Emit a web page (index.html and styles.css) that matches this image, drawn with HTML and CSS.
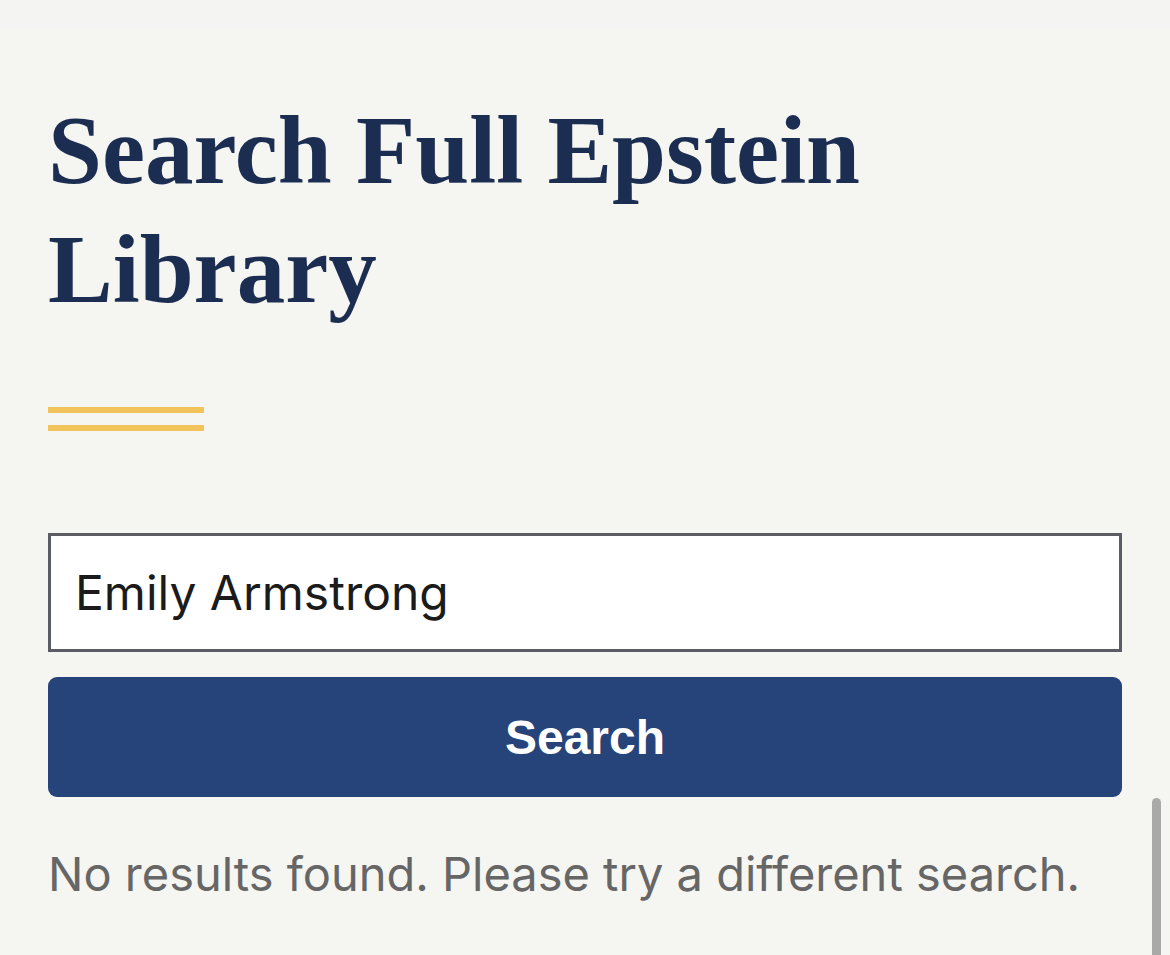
FILE: index.html
```html
<!DOCTYPE html>
<html lang="en">
<head>
<meta charset="utf-8">
<title>Search Full Epstein Library</title>
<link rel="stylesheet" href="styles.css">
</head>
<body>
<div class="topband"></div>
<main class="page">
  <h1 class="title">Search Full Epstein Library</h1>
  <div class="rule"><span></span><span></span></div>
  <form class="search">
    <input class="field" type="text" value="Emily Armstrong" aria-label="Search">
    <button class="btn" type="button">Search</button>
  </form>
  <p class="empty">No results found. Please try a different search.</p>
</main>
<div class="scrollbar"></div>
</body>
</html>
```

FILE: styles.css
```css
html, body {
  margin: 0;
  padding: 0;
  height: 100%;
  overflow: hidden;
}
body {
  background: #f5f5f1;
  font-family: "Inter", "Noto Sans", sans-serif;
}
.topband {
  height: 29px;
  background: #f4f4f3;
}
.page {
  padding: 62px 48px 0 48px;
  display: flex;
  flex-direction: column;
}
.title {
  margin: 0;
  font-family: "Liberation Serif", serif;
  font-weight: 700;
  font-size: 97px;
  line-height: 119px;
  color: #1c2d52;
  max-width: 870px;
}
.rule {
  margin-top: 78px;
  width: 156px;
  display: flex;
  flex-direction: column;
  gap: 12px;
}
.rule span {
  display: block;
  height: 6px;
  background: #f2c35a;
}
.search {
  margin: 102px 0 0 0;
  display: flex;
  flex-direction: column;
  gap: 25px;
}
.field {
  box-sizing: border-box;
  width: 100%;
  height: 119px;
  margin: 0;
  border: 3px solid #5a5d63;
  border-radius: 0;
  background: #ffffff;
  padding: 0 24px;
  font-family: "Inter", "Noto Sans", sans-serif;
  font-size: 48px;
  color: #1b1b1b;
  outline: none;
}
.btn {
  height: 120px;
  margin: 0;
  border: 0;
  border-radius: 9px;
  background: #264479;
  color: #ffffff;
  font-family: "Liberation Sans", Arial, sans-serif;
  font-weight: 700;
  font-size: 48px;
  padding: 0;
}
.empty {
  margin: 49px 0 0 0;
  font-size: 47px;
  line-height: 56px;
  color: #666666;
  font-family: "Inter", "Noto Sans", sans-serif;
}
.scrollbar {
  position: absolute;
  right: 9px;
  top: 798px;
  bottom: 0;
  width: 9px;
  border-radius: 5px 5px 0 0;
  background: #a9a9a9;
}
```
